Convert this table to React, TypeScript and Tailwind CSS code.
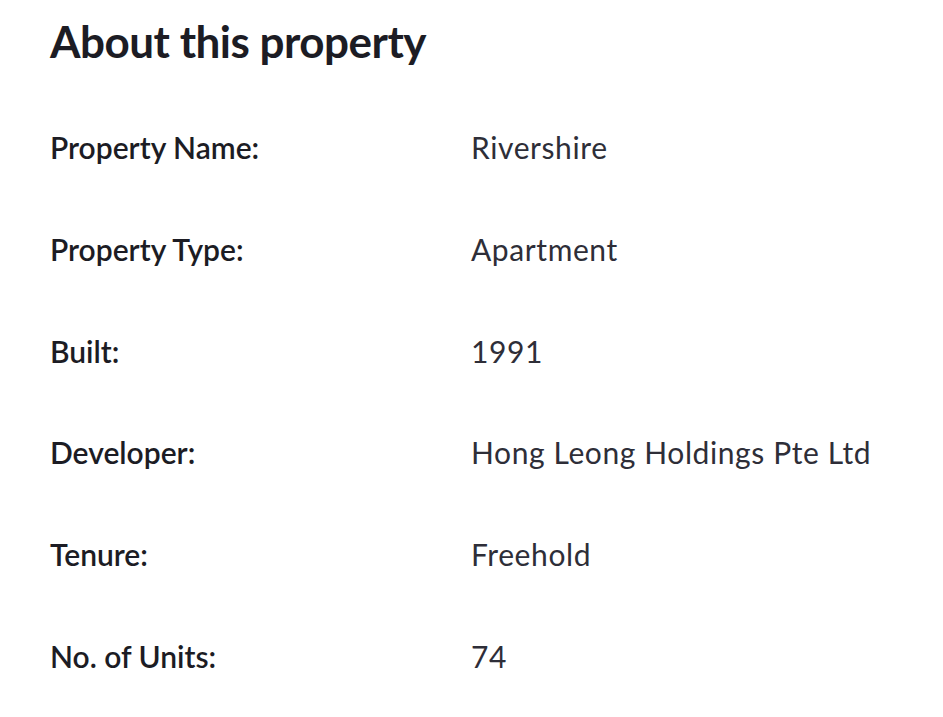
import React from "react";

const rows: [string, string][] = [
  ["Property Name:", "Rivershire"],
  ["Property Type:", "Apartment"],
  ["Built:", "1991"],
  ["Developer:", "Hong Leong Holdings Pte Ltd"],
  ["Tenure:", "Freehold"],
  ["No. of Units:", "74"],
];

export default function App() {
  return (
    <div className="min-h-[717px] w-[943px] bg-white pl-[50px] pt-[12px] font-['Lato',sans-serif] text-[#1c1c24]">
      <h1 className="text-[44px] font-bold leading-[58px] tracking-[-0.5px]">About this property</h1>
      <div className="mt-[54px] flex flex-col">
        {rows.map(([k, v]) => (
          <div key={k} className="flex h-[101.8px] items-start">
            <div className="w-[421px] text-[30px] font-semibold leading-[46px]">{k}</div>
            <div className="text-[30px] font-normal leading-[46px] tracking-[0.6px] text-[#2e2e38]">{v}</div>
          </div>
        ))}
      </div>
    </div>
  );
}
